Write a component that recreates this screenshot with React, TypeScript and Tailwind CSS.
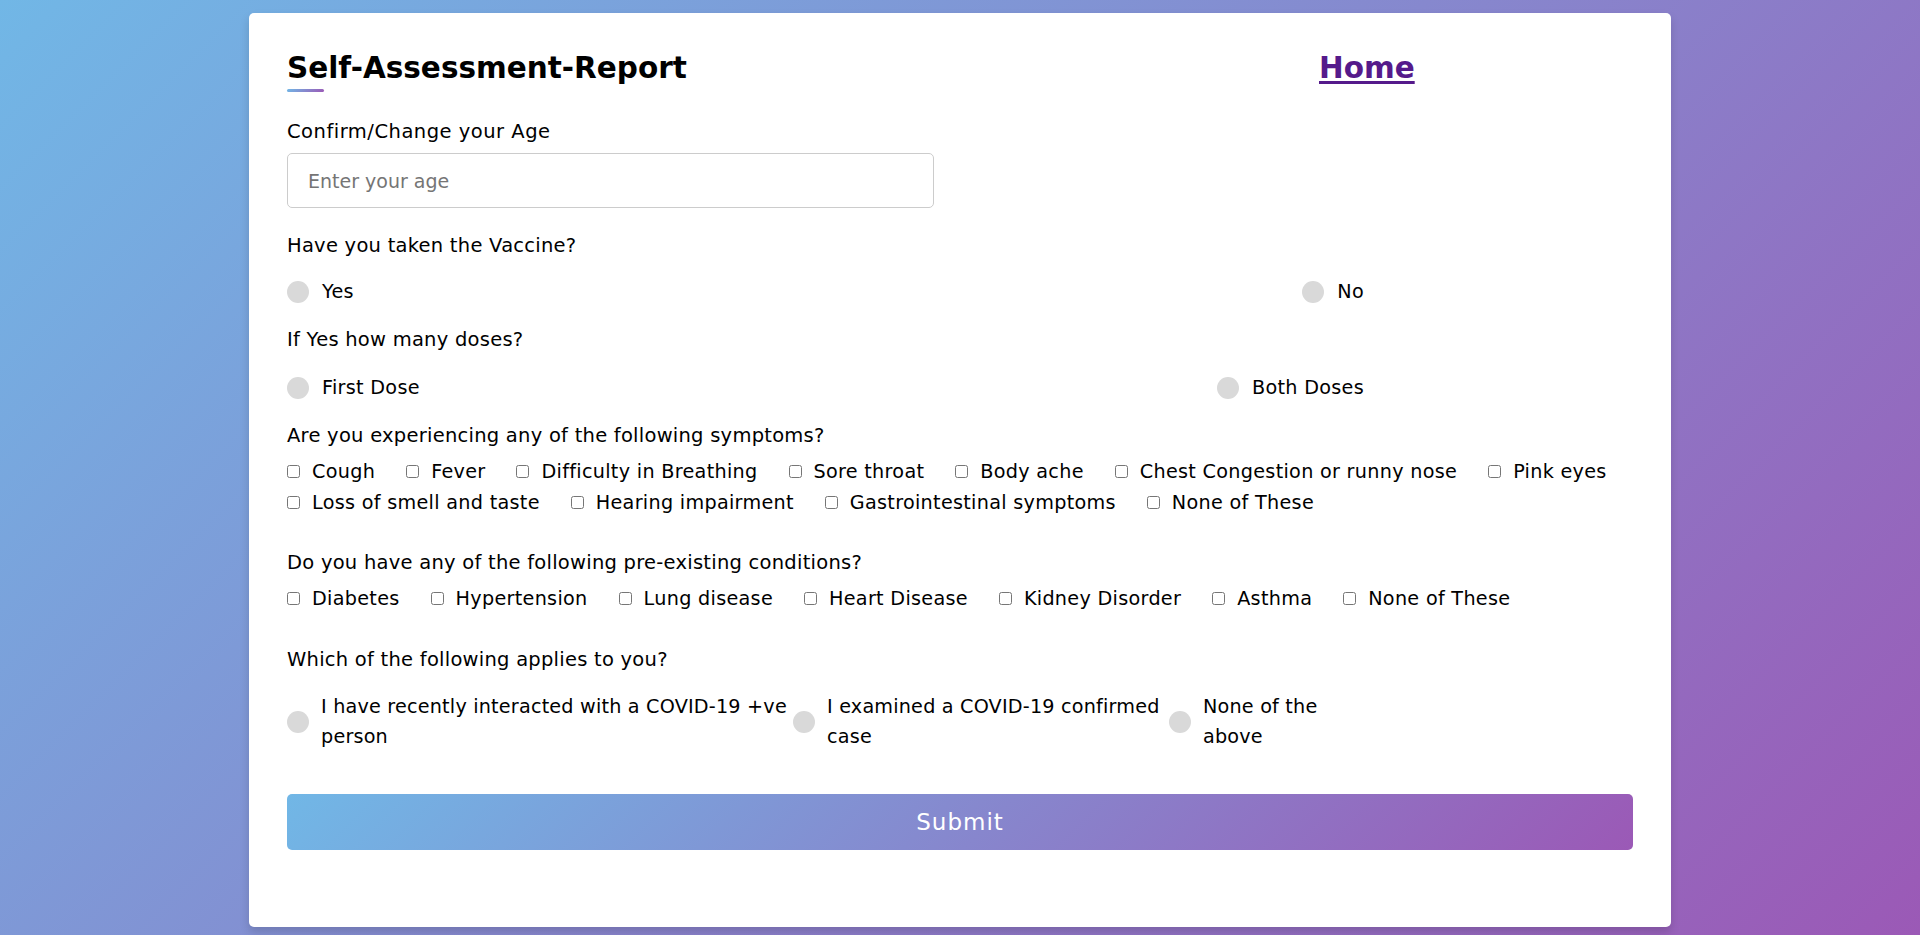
const symptomsRow1 = ["Cough", "Fever", "Difficulty in Breathing", "Sore throat", "Body ache", "Chest Congestion or runny nose", "Pink eyes"];
const symptomsRow2 = ["Loss of smell and taste", "Hearing impairment", "Gastrointestinal symptoms", "None of These"];
const conditions = ["Diabetes", "Hypertension", "Lung disease", "Heart Disease", "Kidney Disorder", "Asthma", "None of These"];

const applies = [
  { lines: ["I have recently interacted with a COVID-19 +ve", "person"], width: "w-[506px]" },
  { lines: ["I examined a COVID-19 confirmed", "case"], width: "w-[376px]" },
  { lines: ["None of the", "above"], width: "flex-1" },
];

function Dot() {
  return <span className="block w-[22px] h-[22px] rounded-full bg-[#d9d9d9] shrink-0" />;
}

function Radio({ label }: { label: string }) {
  return (
    <label className="flex items-center gap-[13px] h-[30px] text-[19.2px] leading-[30px] tracking-[0.3px]">
      <Dot />
      <span>{label}</span>
    </label>
  );
}

function CheckRow({ items }: { items: string[] }) {
  return (
    <div className="flex items-center gap-x-[31px] h-[31px]">
      {items.map((s) => (
        <label key={s} className="flex items-center text-[19.2px] leading-[31px] tracking-[0.3px] whitespace-nowrap">
          <input type="checkbox" className="m-0 w-[13px] h-[13px]" />
          <span className="ml-[12px]">{s}</span>
        </label>
      ))}
    </div>
  );
}

function Question({ text, className }: { text: string; className: string }) {
  return <div className={`text-[19.5px] leading-[27px] tracking-[0.25px] ${className}`}>{text}</div>;
}

export default function App() {
  return (
    <div
      className="min-h-screen w-full pt-[13px] pb-[9px] bg-[linear-gradient(135deg,#71b7e6,#9b59b6)] text-black"
      style={{ fontFamily: '"DejaVu Sans", "Noto Sans", sans-serif' }}
    >
      <div className="mx-auto w-[1422px] bg-white rounded-[5px] shadow-[0_5px_10px_rgba(0,0,0,0.15)] pl-[38px] pr-[38px] pt-[35px] pb-[77px]">
        {/* header */}
        <div className="flex items-start">
          <div className="w-[1032px]">
            <h1 className="text-[29.5px] leading-[40px] font-bold">Self-Assessment-Report</h1>
            <div className="mt-[1px] h-[3px] w-[37px] rounded-[3px] bg-[linear-gradient(135deg,#71b7e6,#9b59b6)]" />
          </div>
          <a href="#" className="text-[29.5px] leading-[40px] font-bold text-[#551a8b] underline decoration-[2.5px] underline-offset-[3px]">
            Home
          </a>
        </div>

        <form onSubmit={(e) => e.preventDefault()}>
          <div className="text-[19.5px] leading-[27px] tracking-[0.5px] mt-[26px]">Confirm/Change your Age</div>
          <input
            type="text"
            placeholder="Enter your age"
            className="mt-[8px] block w-[647px] h-[55px] border border-[#cccccc] rounded-[5px] pl-[20px] text-[19px] outline-none placeholder:text-[#757575]"
          />

          <Question text="Have you taken the Vaccine?" className="mt-[24px]" />
          <div className="mt-[18px] w-[1077px] flex justify-between">
            <Radio label="Yes" />
            <Radio label="No" />
          </div>

          <Question text="If Yes how many doses?" className="mt-[19px]" />
          <div className="mt-[20px] w-[1077px] flex justify-between">
            <Radio label="First Dose" />
            <Radio label="Both Doses" />
          </div>

          <Question text="Are you experiencing any of the following symptoms?" className="mt-[19px]" />
          <div className="mt-[7px]">
            <CheckRow items={symptomsRow1} />
            <CheckRow items={symptomsRow2} />
          </div>

          <Question text="Do you have any of the following pre-existing conditions?" className="mt-[31px]" />
          <div className="mt-[7px]">
            <CheckRow items={conditions} />
          </div>

          <Question text="Which of the following applies to you?" className="mt-[32px]" />
          <div className="mt-[19px] w-[1077px] flex">
            {applies.map((a) => (
              <label key={a.lines[0]} className={`${a.width} flex items-center gap-[12px] pr-[2px]`}>
                <Dot />
                <span className="text-[19.2px] leading-[30px] tracking-[0.2px]">
                  {a.lines.map((l) => (
                    <span key={l} className="block whitespace-nowrap">
                      {l}
                    </span>
                  ))}
                </span>
              </label>
            ))}
          </div>

          <button
            type="submit"
            className="mt-[42px] block w-full h-[56px] rounded-[5px] bg-[linear-gradient(135deg,#71b7e6,#9b59b6)] text-white text-[23px] tracking-[1px]"
          >
            Submit
          </button>
        </form>
      </div>
    </div>
  );
}
